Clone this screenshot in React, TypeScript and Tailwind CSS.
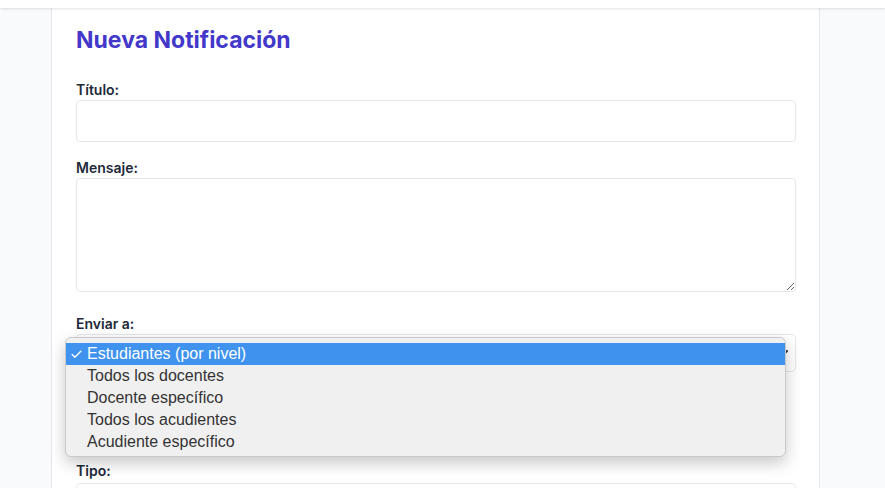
import { Check, ChevronDown } from "lucide-react";

const opciones = [
  "Estudiantes (por nivel)",
  "Todos los docentes",
  "Docente específico",
  "Todos los acudientes",
  "Acudiente específico",
];

const NuevaNotificacion = () => {
  return (
    <div className="h-[488px] bg-gray-50 font-['Inter',sans-serif] overflow-hidden">
      <div className="h-[8px] bg-white shadow-[0_1px_3px_rgba(0,0,0,0.12)] relative z-10" />
      <div className="w-[769px] ml-[51px] bg-white border-x border-gray-200 pl-[24px] pr-[23px] pt-4 pb-4 relative">
        <h2 className="text-[23px] leading-8 font-bold text-[#4338ca] mb-6">Nueva Notificación</h2>

        <div className="mb-4">
          <label className="block text-sm font-semibold text-gray-800">Título:</label>
          <input
            type="text"
            className="block w-full h-[42px] border border-gray-200 rounded px-3"
          />
        </div>

        <div className="mb-[22px]">
          <label className="block text-sm font-semibold text-gray-800">Mensaje:</label>
          <textarea
            rows={4}
            className="block w-full h-[114px] border border-gray-200 rounded px-3 py-2"
          />
        </div>

        <div className="mb-[89px] relative">
          <label className="block text-sm font-semibold text-gray-800">Enviar a:</label>
          <div className="h-[38px] border border-gray-200 rounded bg-white flex items-center justify-end pr-1">
            <ChevronDown className="h-4 w-4 text-gray-800" strokeWidth={3} />
          </div>

          {/* menú nativo abierto */}
          <div className="absolute left-[-11px] top-[23px] w-[721px] h-[120px] bg-[#f0f0f0] border border-[#c9c9c9] rounded-md shadow-[0_6px_16px_rgba(0,0,0,0.22)] pt-[5px] font-['Liberation_Sans',sans-serif] text-[16px]">
            {opciones.map((op, i) => (
              <div
                key={op}
                className={`h-[22px] flex items-center ${
                  i === 0 ? "bg-[#3f93ee] text-white" : "text-[#333333]"
                }`}
              >
                <span className="w-[21px] flex justify-end pr-[4px]">
                  {i === 0 && <Check className="h-[13px] w-[13px]" strokeWidth={2.5} />}
                </span>
                {op}
              </div>
            ))}
          </div>
        </div>

        <div>
          <label className="block text-sm font-semibold text-gray-800">Tipo:</label>
          <div className="h-[38px] border border-gray-200 rounded bg-white mt-[2px]" />
        </div>
      </div>
    </div>
  );
};

export default function App() {
  return <NuevaNotificacion />;
}
